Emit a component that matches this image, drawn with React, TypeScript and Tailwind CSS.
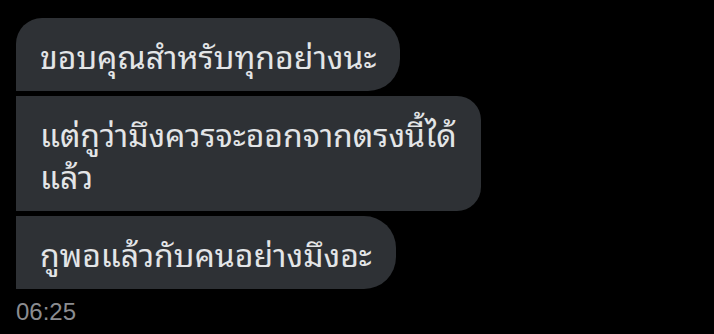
const messages = [
	{ id: 1, lines: ["ขอบคุณสำหรับทุกอย่างนะ"], shape: "rounded-tl-[26px] rounded-r-[32px]" },
	{ id: 2, lines: ["แต่กูว่ามึงควรจะออกจากตรงนี้ได้", "แล้ว"], shape: "rounded-r-[24px]" },
	{ id: 3, lines: ["กูพอแล้วกับคนอย่างมึงอะ"], shape: "rounded-r-[32px]" },
];

const App = () => {
	return (
		<div className="min-h-[334px] w-full bg-black pl-4 pt-[18px] font-['Noto_Sans_Thai_Looped','Noto_Sans',sans-serif]">
			<div className="flex flex-col items-start gap-[5px]">
				{messages.map((m) => (
					<div
						key={m.id}
						className={`bg-[#2e3135] px-6 pt-4 pb-[15px] text-[32px] leading-[42px] text-[#e3e5e7] ${m.shape}`}
					>
						{m.lines.map((line, i) => (
							<div key={i} className="whitespace-nowrap">
								{line}
							</div>
						))}
					</div>
				))}
			</div>
			<p className="mt-[9px] font-['Liberation_Sans',sans-serif] text-[24px] leading-[28px] text-[#8b8c90]">
				06:25
			</p>
		</div>
	);
};

export default App;
